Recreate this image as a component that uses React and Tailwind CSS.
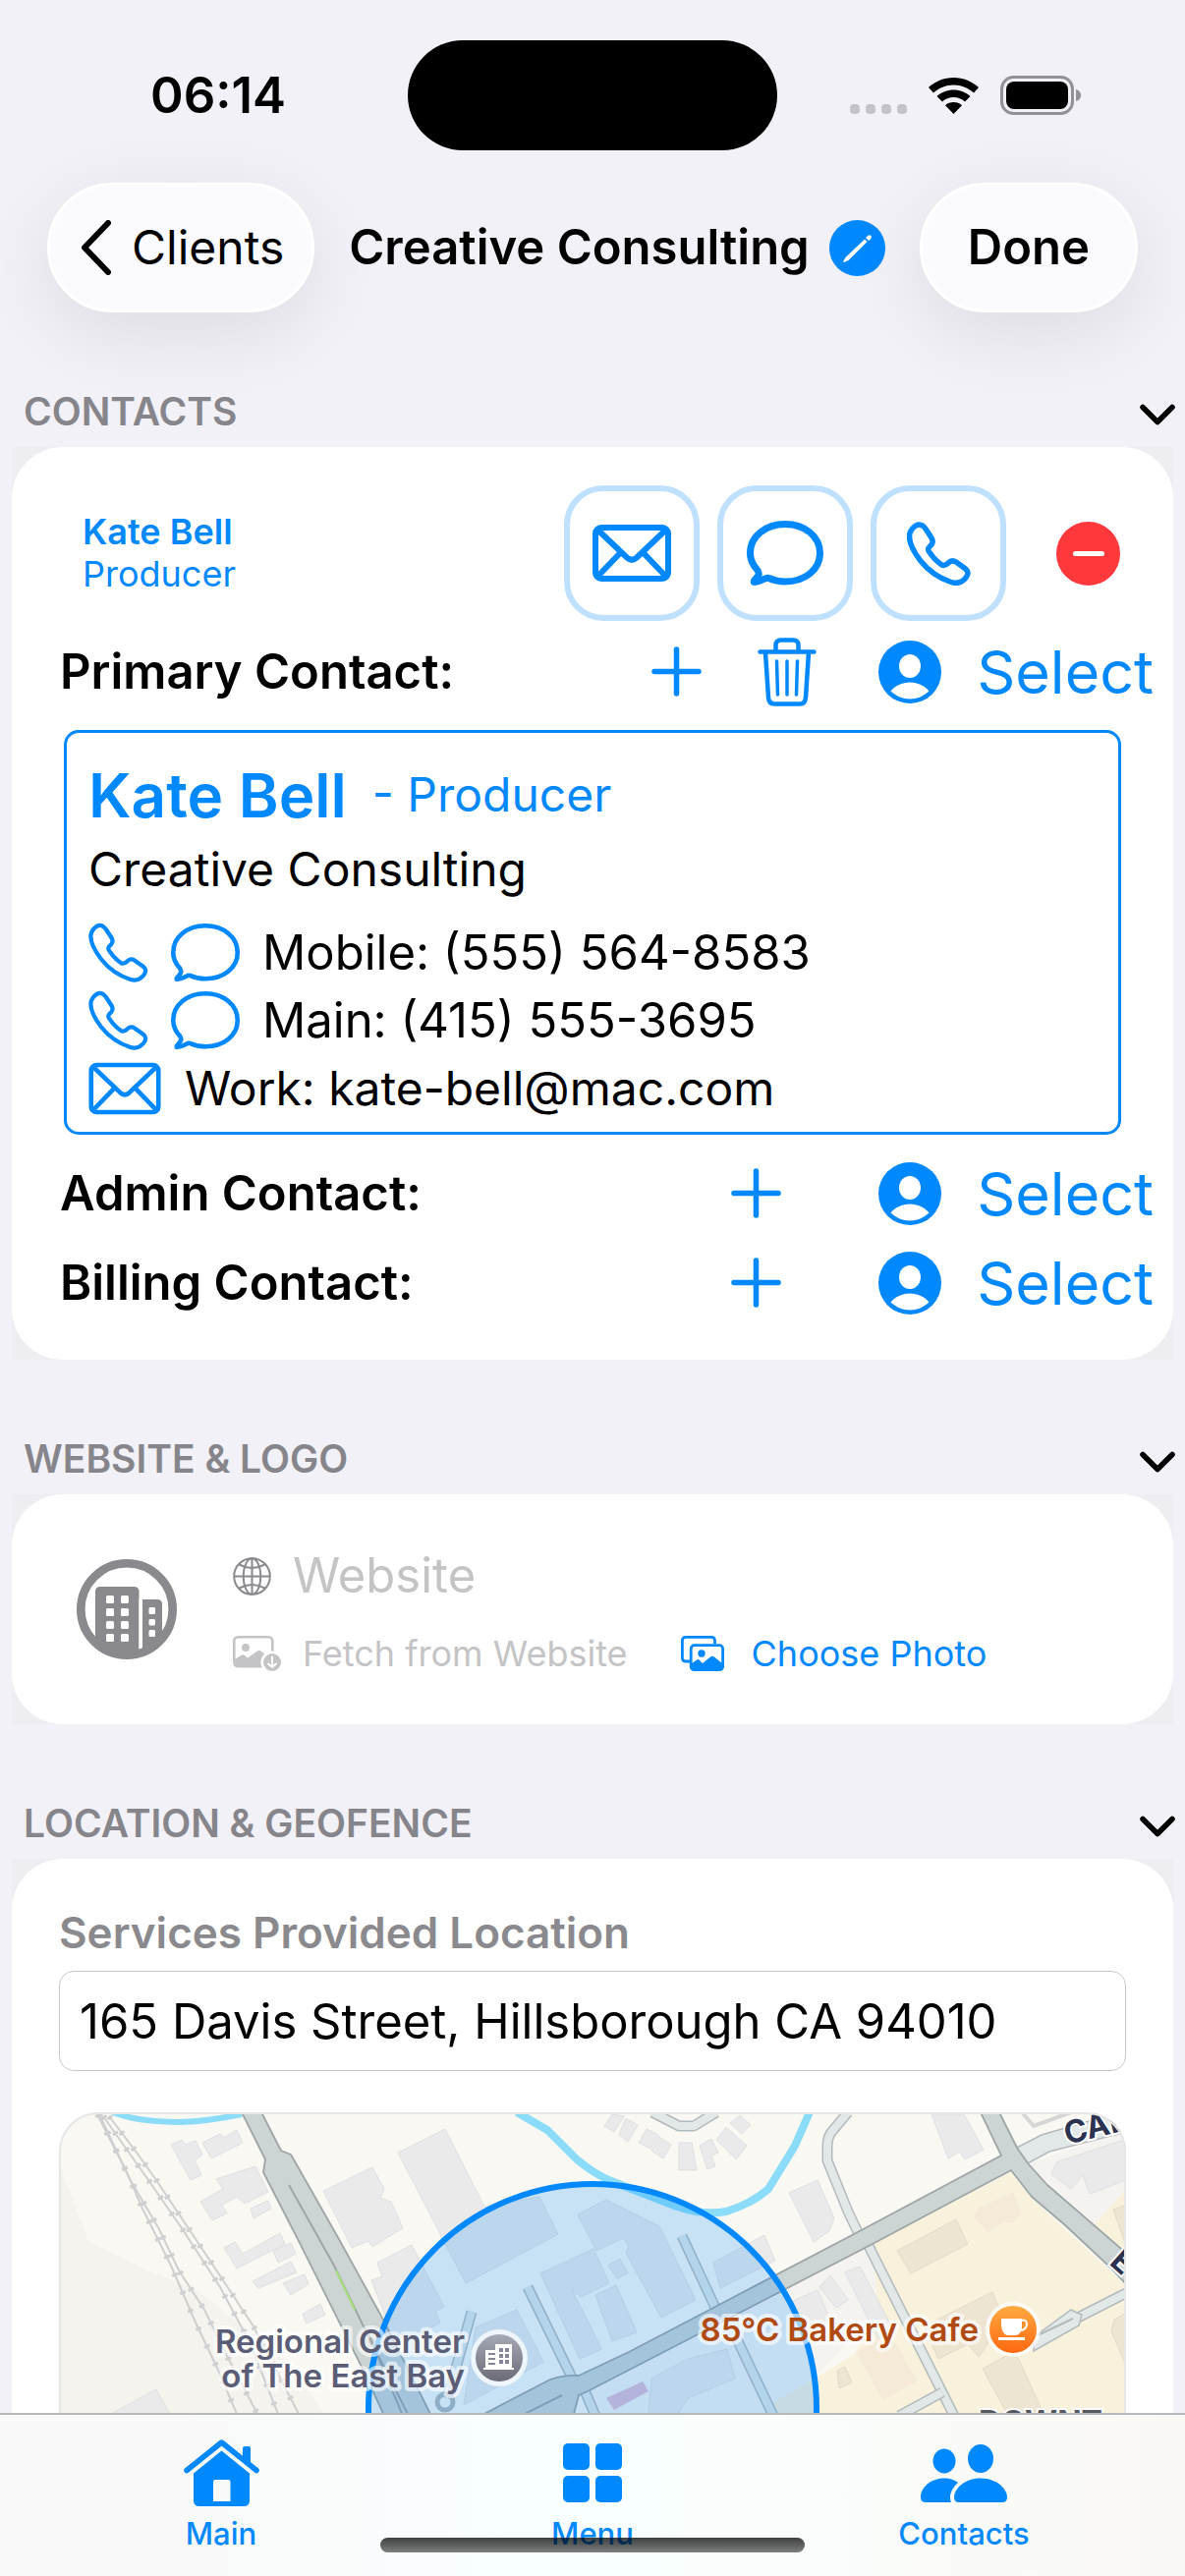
import React, { useState } from 'react';

function MailIcon({ className, strokeWidth = 6 }) {
    return (
        <svg viewBox="0 0 80 58" className={className} fill="none" stroke="currentColor" strokeWidth={strokeWidth} strokeLinejoin="round">
            <rect x="3" y="3" width="74" height="52" rx="6" />
            <path d="M5 5 L35 33.5 Q40 38 45 33.5 L75 5" />
            <path d="M5 53 L29 28 M75 53 L51 28" />
        </svg>
    );
}

function BubbleIcon({ className, strokeWidth = 7 }) {
    return (
        <svg viewBox="0 0 78 66" className={className} fill="none" stroke="currentColor" strokeWidth={strokeWidth} strokeLinejoin="round">
            <path d="M39 3.5 C59 3.5 74.5 16 74.5 33 C74.5 50 59 62 39 62 C33 62 27 60.5 22.500 58.500 C19 57 17 61.500 8 62.500 C7 62.500 7 61.500 8 60.500 C12 56 13.500 54.500 11 50.500 C6 45 3.500 40 3.500 33 C3.500 16 19 3.500 39 3.500Z" />
        </svg>
    );
}

function PhoneIcon({ className, strokeWidth = 5.5 }) {
    return (
        <svg viewBox="0 0 65 65" className={className} fill="none" stroke="currentColor" strokeWidth={strokeWidth} strokeLinejoin="round">
            <path d="M12.500 3 C15.500 3 17.500 5 19.500 8 L25 16.500 C27 19.500 26.500 21.500 24.500 24 C22 26.500 20.500 27.500 22.500 30.500 C26.500 36.500 31 41 35.500 44 C37.500 45 39.500 44.500 42 42 C44.500 39.500 47.500 39.500 50 41 L59 47.500 C62.500 50 63 53 60 57 C56 62 51 63.500 45 61.500 C34 58 22 50 14 40 C7 31 2.500 22 2.500 15 C2.500 9 8 3 12.500 3Z" />
        </svg>
    );
}

function PlusIcon() {
    return (
        <svg viewBox="0 0 51 51" className="w-[51px] h-[51px]" fill="none" stroke="currentColor" strokeWidth="5.5" strokeLinecap="round">
            <path d="M25.500 3 V48 M3 25.500 H48" />
        </svg>
    );
}

function TrashIcon() {
    return (
        <svg viewBox="0 0 60 70" className="w-[60px] h-[70px]" fill="none" stroke="currentColor" strokeWidth="4.5" strokeLinecap="round" strokeLinejoin="round">
            <path d="M2.500 14.500 H57.500" />
            <path d="M18.500 14 V8 Q18.500 2.500 24 2.500 H36 Q41.500 2.500 41.500 8 V14" />
            <path d="M8 15 L11 61 Q11.500 67.500 17 67.500 H43 Q48.500 67.500 49 61 L52 15" />
            <path strokeWidth="3.500" d="M19.500 24 L20.500 58 M30 24 V58 M40.500 24 L39.500 58" />
        </svg>
    );
}

function PersonIcon() {
    return (
        <svg viewBox="0 0 64 64" className="w-16 h-16">
            <circle cx="32" cy="32" r="32" fill="currentColor" />
            <ellipse cx="32" cy="26" rx="11" ry="12" fill="#fff" />
            <path fill="#fff" d="M12.500 51.500 C17 46 24 42.500 32 42.500 C40 42.500 47 46 51.500 51.500 C46 56.500 39.500 59.500 32 59.500 C24.500 59.500 18 56.500 12.500 51.500Z" />
        </svg>
    );
}

function ChevronDown() {
    return (
        <svg viewBox="0 0 36 22" className="w-9 h-[22px]" fill="none" stroke="#000" strokeWidth="5.5" strokeLinecap="round" strokeLinejoin="round">
            <path d="M3 3.500 L18 18.500 L33 3.500" />
        </svg>
    );
}

function GlobeIcon() {
    return (
        <svg viewBox="0 0 39 39" className="w-[39px] h-[39px] text-[#8a8a8e]" fill="none" stroke="currentColor" strokeWidth="2">
            <circle cx="19.500" cy="19.500" r="18.300" />
            <ellipse cx="19.500" cy="19.500" rx="8.800" ry="18.300" />
            <path d="M19.500 1 V38 M1 19.500 H38 M6.500 7.500 Q19.500 14.500 32.500 7.500 M6.500 31.500 Q19.500 24.500 32.500 31.500" />
        </svg>
    );
}

function CompanyLogo() {
    const windows = [37, 50, 63, 76];
    return (
        <svg viewBox="0 0 102 102" className="w-[102px] h-[102px]">
            <defs>
                <clipPath id="logo-clip">
                    <circle cx="51" cy="51" r="50" />
                </clipPath>
            </defs>
            <circle cx="51" cy="51" r="46.700" fill="none" stroke="#8a8a8e" strokeWidth="8.600" />
            <g clipPath="url(#logo-clip)">
                <path fill="#8a8a8e" d="M19 110 V33 Q19 28 24 28 H58 Q63.500 28 63.500 33 V110Z" />
                <path fill="#8a8a8e" d="M67 110 V41 H82 Q87 41 87 46 V110Z" />
                <path fill="#8a8a8e" d="M19 80 L40 102 H64 V92 Q67 92 67 90 L88 72 V102 H19Z" />
                <path fill="#fff" d="M63.500 41 H67 V90 L63.500 91.500Z" />
                {windows.map((y) => (
                    <g key={y} fill="#fff">
                        <rect x="30" y={y} width="8" height="8" rx="1.500" />
                        <rect x="45" y={y} width="8" height="8" rx="1.500" />
                    </g>
                ))}
                <g fill="#fff">
                    <rect x="73.500" y="49" width="6.500" height="7" rx="1.500" />
                    <rect x="73.500" y="61" width="6.500" height="6.500" rx="1.500" />
                    <rect x="73.500" y="72" width="6.500" height="7" rx="1.500" />
                </g>
            </g>
        </svg>
    );
}

function PhotoDownloadIcon() {
    return (
        <svg viewBox="0 0 49 36" className="w-[49px] h-9">
            <rect x="1.300" y="1.300" width="39" height="30" rx="4" fill="none" stroke="currentColor" strokeWidth="2.600" />
            <circle cx="13" cy="12" r="4" fill="currentColor" />
            <path fill="currentColor" d="M1.500 24 L9 19.500 Q10.500 18.800 12 20 L15 22.500 L25 15.500 Q27 14.500 29 16 L40 24 V31.500 H3Z" />
            <circle cx="40" cy="27" r="11.500" fill="#fff" />
            <circle cx="40" cy="27" r="9" fill="currentColor" />
            <path d="M40 21.500 V32 M36 28.500 L40 32 L44 28.500" fill="none" stroke="#fff" strokeWidth="1.800" strokeLinecap="round" />
        </svg>
    );
}

function PhotosIcon() {
    return (
        <svg viewBox="0 0 44 36" className="w-11 h-9" fill="none" stroke="currentColor" strokeWidth="2.800">
            <path d="M9 26 H5 Q1.400 26 1.400 22.500 V5 Q1.400 1.400 5 1.400 H31 Q34.500 1.400 34.500 5 V8" />
            <rect x="10.200" y="9.700" width="32.400" height="25" rx="3.500" />
            <circle cx="21" cy="18" r="3.700" fill="currentColor" stroke="none" />
            <path fill="currentColor" stroke="none" d="M10 29 L16 24.500 Q17.500 23.500 19 25 L22 28 L30 21.500 Q32 20 34 21.500 L43 29 V34 H10Z" />
        </svg>
    );
}

const buildings = [
    '174,2182 185,2177 189,2182 199,2178 206,2192 198,2198 205,2213 194,2218',
    '206,2180 224,2171 228,2175 241,2167 247,2180 215,2196',
    '220,2217 260,2204 273,2230 249,2242 241,2235 226,2243 231,2252 216,2259 204,2240 227,2227',
    '255,2247 273,2239 276,2247 258,2257',
    '228,2287 239,2281 247,2293 285,2272 290,2283 241,2308',
    '278,2290 296,2282 301,2293 283,2302',
    '257,2321 296,2301 302,2312 263,2328',
    '288,2323 310,2314 314,2324 296,2335',
    '308,2354 326,2344 331,2355 312,2364',
    '329,2229 379,2205 391,2227 387,2236 398,2240 410,2267 379,2286 375,2280 358,2287',
    '405,2190 453,2166 493,2245 549,2235 568,2273 474,2323',
    '384,2302 419,2284 452,2347 443,2352 448,2363 400,2390 390,2350 378,2320 389,2316',
    '113,2456 159,2431 175,2460',
    '588,2253 617,2238 671,2265 708,2340 673,2358 637,2292 640,2285 634,2277 607,2290',
    '550,2313 604,2288 620,2323 591,2337 582,2330 600,2365 612,2390 590,2400',
    '606,2335 627,2325 648,2373 623,2382',
    '619,2305 631,2298 639,2313 628,2318',
    '484,2368 526,2350 553,2403 472,2447',
    '726,2302 778,2274 789,2300 733,2328',
    '663,2420 700,2400 740,2390 748,2420 700,2440 690,2456 660,2456',
    '803,2231 832,2218 849,2257 844,2270 828,2281',
    '834,2327 845,2315 863,2340 851,2348',
    '860,2312 875,2306 909,2370 894,2380',
    '805,2342 832,2330 845,2360 815,2375',
    '1070,2212 1075,2200 1141,2178 1146,2178 1146,2218 1109,2232 1102,2213 1090,2227',
    '948,2151 981,2151 1001,2187 982,2197 977,2189 965,2196',
    '615,2163 623,2151 635,2153 625,2169',
    '630,2172 637,2155 649,2162 639,2179',
    '650,2180 658,2166 670,2172 662,2186',
    '663,2188 671,2174 683,2182 675,2196',
    '691,2180 704,2180 709,2208 691,2208',
    '712,2183 724,2176 731,2190 724,2193 728,2204 720,2207',
    '729,2177 739,2164 760,2183 749,2197',
    '743,2160 753,2152 764,2162 755,2171',
];

const downtownBuildings = [
    '913,2290 973,2258 985,2283 927,2313',
    '940,2367 1010,2332 1022,2360 996,2398 985,2385 955,2400',
    '1000,2410 1033,2392 1062,2456 1025,2456',
    '1134,2360 1146,2353 1146,2407 1131,2372',
    '1133,2248 1146,2243 1146,2285',
    '852,2412 860,2408 867,2424 854,2430',
];

const rails = [
    'M99 2151 L130 2212 L145 2247 L174 2305 L199 2363 L220 2407 L241 2456',
    'M101 2151 L132 2217 L162 2268 L182 2310 L208 2350 L231 2397 L262 2456',
    'M105 2153 L151 2218 L185 2267 L224 2327 L254 2383 L283 2456',
    'M111 2153 L139 2190 L159 2218 L195 2272 L229 2323 L258 2367 L304 2456',
];

const lanes = [
    'M863 2149 L848 2167 Q842 2173 842 2183 V2198 L863 2250 L874 2273',
    'M883 2283 L971 2458',
    'M664 2149 L691 2163 H706 L729 2149',
    'M915 2458 L959 2434',
    'M1052 2383 L1095 2359 L1146 2333',
    'M537 2327 L585 2425',
    'M694 2275 L729 2350',
    'M750 2380 L787 2458',
    'M480 2352 L463 2413 L455 2440',
    'M594 2430 L606 2458',
];

function GeofenceMap() {
    return (
        <svg viewBox="60 2149 1086 420" className="block w-full h-auto" fontFamily='Inter, "Noto Sans", sans-serif'>
            <defs>
                <linearGradient id="pin-gray" x1="0" y1="0" x2="0" y2="1">
                    <stop offset="0" stopColor="#a6a9b6" />
                    <stop offset="1" stopColor="#6b6b77" />
                </linearGradient>
                <linearGradient id="pin-orange" x1="0" y1="0" x2="0" y2="1">
                    <stop offset="0" stopColor="#ffab42" />
                    <stop offset="1" stopColor="#ff6810" />
                </linearGradient>
            </defs>
            <rect x="60" y="2149" width="1086" height="420" fill="#f9f8f3" />
            <path fill="#f4f3ee" d="M60 2200 L90 2280 L150 2310 L200 2330 L290 2400 L330 2456 V2569 H60Z" />
            <path fill="#f4f3f0" d="M888 2283 L726 2348 L600 2432 V2460 H790 L894 2350Z" />
            <path fill="#f4f3f0" d="M1046 2201 L1146 2168 V2227 L1114 2263Z" />
            <path fill="#f8f1dc" d="M888 2283 L1029 2210 L1050 2237 L1146 2325 V2569 H740 L789 2443 L834 2417 L870 2395 L894 2350Z" />
            <path fill="#f8f1dc" d="M1114 2263 L1146 2227 V2292Z" />
            {buildings.map((points) => (
                <polygon key={points} points={points} fill="#ebeaea" stroke="#dfdfdf" strokeWidth="1" />
            ))}
            {downtownBuildings.map((points) => (
                <polygon key={points} points={points} fill="#ede5d2" stroke="#e2d9c6" strokeWidth="1" />
            ))}
            <polygon points="991,2255 995,2247 1031,2230 1039,2251 1032,2261 1020,2261 1005,2271" fill="#f5e9d7" />
            <polygon points="871,2393 905,2375 934,2422 898,2442" fill="#f5e9d7" />
            <polygon points="617,2440 654,2423 660,2433 625,2452" fill="#e2bfd2" />
            {rails.map((d) => (
                <g key={d} fill="none" stroke="#cfcfcf">
                    <path d={d} strokeWidth="2" />
                    <path d={d} strokeWidth="6" strokeDasharray="3 17" />
                </g>
            ))}
            <g fill="none" stroke="#8bdcf8" strokeLinejoin="round">
                <path strokeWidth="6" d="M115 2149 Q140 2159 184 2159 Q212 2158 246 2151" />
                <path strokeWidth="8" d="M526 2149 L557 2167 L587 2197 Q605 2212 622 2219 L689 2245 Q716 2254 739 2250 Q765 2242 782 2227 Q800 2198 809 2183 L824 2149" />
            </g>
            {lanes.map((d) => (
                <g key={d} fill="none" strokeLinejoin="round">
                    <path d={d} stroke="#b3babb" strokeWidth="11" />
                    <path d={d} stroke="#e2e8e8" strokeWidth="8" />
                </g>
            ))}
            <path fill="#e2e8e8" stroke="#b3babb" strokeWidth="1.500" d="M1052 2378 L1090 2350 L1096 2353 L1101 2355 L1098 2366 L1052 2392Z" />
            <path stroke="#b3babb" strokeWidth="2" d="M1056 2376 L1092 2359" />
            <circle cx="453" cy="2444" r="8" fill="none" stroke="#b3babb" strokeWidth="5" />
            <path fill="#e2e8e8" stroke="#b3babb" strokeWidth="1.500" d="M1033 2186 L1060 2172 L1150 2146 V2168 L1068 2189 L1044 2202Z" />
            <path fill="none" stroke="#d6d6d4" strokeWidth="4" d="M1040 2149 L1052 2163 L1090 2149" />
            <g fill="#cdd4d4" stroke="#9ea5a5" strokeWidth="1.800" strokeLinejoin="round">
                <path d="M245 2147 L270 2197 L268 2210 L304 2280 L369 2410 L392 2460 H440 L390 2360 L346 2280 L296 2192 L286 2188 L265 2147Z" />
                <path d="M485 2460 L560 2421 Q575 2416 589 2417 L640 2393 L726 2348 L871 2272 L1019 2193 L997 2147 H1016 L1035 2185 L1046 2201 L1066 2223 L1148 2294 V2326 L1130 2307 L1083 2263 L1050 2235 L1029 2208 L888 2283 L600 2432 L589 2437 L583 2460Z" />
            </g>
            <path fill="none" stroke="#9ea5a5" strokeWidth="2" d="M294 2223 L340 2305 L369 2365 L417 2460 M374 2372 L410 2458 M530 2458 L572 2437" />
            <path stroke="#a5e07c" strokeWidth="2" d="M342 2310 L361 2350" />
            <circle cx="603" cy="2450" r="228" fill="#0088ff" fillOpacity="0.2" stroke="#0088ff" strokeWidth="6" />

            <g fontWeight="600" fontSize="33" stroke="#fff" strokeOpacity="0.65" strokeWidth="8" strokeLinejoin="round" paintOrder="stroke">
                <text x="473" y="2394" textAnchor="end" fill="#5a5d75">Regional Center</text>
                <text x="473" y="2429" textAnchor="end" fill="#5a5d75">of The East Bay</text>
                <text x="996" y="2382" textAnchor="end" fill="#b04a12">85°C Bakery Cafe</text>
            </g>
            <g fontWeight="700" fontSize="32" fill="#2b3350" stroke="#fff" strokeWidth="4" paintOrder="stroke">
                <text x="1086" y="2182" transform="rotate(-14 1086 2182)">CAL</text>
                <text x="1128" y="2303" transform="rotate(42 1128 2303)">E</text>
                <text x="996" y="2476" fill="#55585f">DOWNT</text>
            </g>

            <circle cx="508" cy="2399" r="29" fill="#fff" fillOpacity="0.75" />
            <circle cx="508" cy="2399" r="24" fill="url(#pin-gray)" />
            <g fill="#fff">
                <path d="M494 2409 V2391 H504 V2385 H521 V2409 H523 V2411 H492 V2409Z" />
                <path fill="#85869a" d="M508 2389 h4v4h-4z M514 2389 h4v4h-4z M508 2395 h4v4h-4z M514 2395 h4v4h-4z M508 2401 h4v4h-4z M514 2401 h4v4h-4z M497 2394 h7v2h-7z M497 2399 h7v2h-7z M497 2404 h7v2h-7z" />
            </g>
            <circle cx="1031" cy="2370" r="28" fill="#fff" fillOpacity="0.75" />
            <circle cx="1031" cy="2370" r="24" fill="url(#pin-orange)" />
            <path fill="#fff" d="M1019 2359 H1040 V2368 Q1039 2376 1033 2376 H1025 Q1020 2375 1019 2366Z M1016 2378 H1043 V2381 H1016Z" />
            <path fill="none" stroke="#fff" strokeWidth="2" d="M1039 2361 Q1045 2359 1045 2365 Q1044 2371 1038 2371" />
        </svg>
    );
}

function StatusBar() {
    return (
        <div className="grid grid-cols-[1fr_376px_1fr] items-center h-28 mt-[41px]">
            <div className="pl-[153px] text-[51px] leading-[60px] font-semibold">06:14</div>
            <div className="h-28 rounded-full bg-black" />
            <div className="flex items-center justify-end gap-[22px] pr-[106px]">
                <div className="flex gap-[6px] pt-7">
                    <span className="w-[10px] h-[10px] rounded-[4px] bg-[#c4c3c9]" />
                    <span className="w-[10px] h-[10px] rounded-[4px] bg-[#c4c3c9]" />
                    <span className="w-[10px] h-[10px] rounded-[4px] bg-[#c4c3c9]" />
                    <span className="w-[10px] h-[10px] rounded-[4px] bg-[#c4c3c9]" />
                </div>
                <svg viewBox="0 0 51 37" className="w-[51px] h-[37px]">
                    <path d="M25.500 0 C35.500 0 44.500 4 51 10 L46 15.500 C40.500 10.500 33.500 7.500 25.500 7.500 C17.500 7.500 10.500 10.500 5 15.500 L0 10 C6.500 4 15.500 0 25.500 0Z" />
                    <path d="M25.500 12.500 C32 12.500 38 15 42.500 19 L37 24.500 C34 21.700 30 20 25.500 20 C21 20 17 21.700 14 24.500 L8.500 19 C13 15 19 12.500 25.500 12.500Z" />
                    <path d="M25.500 25 C28.700 25 31.700 26.200 34 28.200 L25.500 37 L17 28.200 C19.300 26.200 22.300 25 25.500 25Z" />
                </svg>
                <svg viewBox="0 0 82 40" className="w-[82px] h-10">
                    <rect x="1.500" y="1.500" width="72" height="37" rx="12" fill="none" stroke="#929196" strokeWidth="3" />
                    <rect x="6" y="6" width="63" height="28" rx="8" />
                    <path d="M77 14 C81 15 82 18 82 20 C82 22 81 25 77 26Z" fill="#929196" />
                </svg>
            </div>
        </div>
    );
}

function NavBar() {
    return (
        <header className="flex items-center justify-between h-[132px] mt-[33px] px-12">
            <button className="flex items-center gap-5 h-full pl-[31px] pr-7 rounded-full border-3 border-white bg-[#fbfbff] text-[48px] shadow-[0_20px_80px_rgba(0,0,0,0.09)]">
                <svg viewBox="0 0 32 56" className="w-8 h-14" fill="none" stroke="#000" strokeWidth="6" strokeLinecap="round" strokeLinejoin="round">
                    <path d="M28 3 L4 28 L28 53" />
                </svg>
                Clients
            </button>
            <div className="flex items-center gap-5">
                <h1 className="text-[49px] font-semibold">Creative Consulting</h1>
                <button aria-label="Edit name">
                    <svg viewBox="0 0 57 57" className="w-[57px] h-[57px]">
                        <circle cx="28.500" cy="28.500" r="28.500" fill="#0088ff" />
                        <path fill="#fff" d="M36 19.500 L38.500 22 L19.500 41 L15 43 Q14 43 14.300 41.800 L16.500 38Z M37.200 18 L39 16 Q41 14.500 42.500 16 Q43.500 17.500 42 19.500 L40 21Z" />
                    </svg>
                </button>
            </div>
            <button className="h-full px-[46px] rounded-full border-3 border-white bg-[#fbfbff] text-[49px] font-semibold shadow-[0_20px_80px_rgba(0,0,0,0.09)]">Done</button>
        </header>
    );
}

function Section({ title, children }) {
    const [open, setOpen] = useState(true);
    return (
        <section>
            <button onClick={() => setOpen(!open)} className="flex items-end justify-between w-full h-[137px] pl-6 pr-[10px] pb-3">
                <span className="text-[39px] leading-[48px] font-semibold text-[#86858b]">{title}</span>
                <span className="pb-[10px]">
                    <ChevronDown />
                </span>
            </button>
            {open && (
                <div className="mx-3 bg-[#eeedf2]">
                    <div className="rounded-[52px] bg-white overflow-hidden">{children}</div>
                </div>
            )}
        </section>
    );
}

function RoundButton({ label, children }) {
    return (
        <button aria-label={label} className="flex items-center justify-center w-[138px] h-[138px] rounded-[40px] border-6 border-[#bfe0ff]">
            {children}
        </button>
    );
}

function ContactRow({ label, removable }) {
    return (
        <div className="flex items-center h-[91px] pl-[49px] pr-5">
            <span className="flex-1 text-[49px] font-semibold text-black">{label}</span>
            <button aria-label="Add" className={removable ? 'mr-[57px]' : 'mr-[99px]'}>
                <PlusIcon />
            </button>
            {removable && (
                <button aria-label="Delete" className="mr-[63px]">
                    <TrashIcon />
                </button>
            )}
            <button className="flex items-center gap-9 text-[61px] leading-[72px]">
                <PersonIcon />
                Select
            </button>
        </div>
    );
}

function ContactsCard() {
    return (
        <div className="pt-[39px] pb-[33px] text-[#0088ff]">
            <div className="flex items-center pl-[72px] pr-[54px]">
                <div className="flex-1 text-[36px] leading-[43px]">
                    <div className="font-semibold">Kate Bell</div>
                    <div>Producer</div>
                </div>
                <div className="flex gap-[18px] mr-[51px]">
                    <RoundButton label="Email">
                        <MailIcon className="w-20 h-[58px]" />
                    </RoundButton>
                    <RoundButton label="Message">
                        <BubbleIcon className="w-[78px] h-[66px]" />
                    </RoundButton>
                    <RoundButton label="Call">
                        <PhoneIcon className="w-[65px] h-[65px]" />
                    </RoundButton>
                </div>
                <button aria-label="Remove" className="flex items-center justify-center w-[65px] h-[65px] rounded-full bg-[#ff383c]">
                    <span className="w-8 h-[5px] rounded-full bg-white" />
                </button>
            </div>

            <div className="pt-1.5 pb-3.5">
                <ContactRow label="Primary Contact:" removable />
            </div>

            <div className="mx-[53px] px-[22px] pt-[27px] pb-[10px] rounded-[15px] border-3 border-[#0088ff] text-[48px] text-black">
                <div className="flex items-center gap-[26px] h-[72px] text-[#0088ff]">
                    <h2 className="text-[62px] font-semibold">Kate Bell</h2>
                    <span>- Producer</span>
                </div>
                <div className="mt-[10px] mb-5 leading-[60px]">Creative Consulting</div>
                <div className="flex items-center gap-[22px] h-[69px] text-[49px]">
                    <PhoneIcon className="w-[61px] h-[61px] text-[#0088ff]" strokeWidth={4.5} />
                    <BubbleIcon className="w-[72px] h-[61px] text-[#0088ff]" strokeWidth={5} />
                    <span>Mobile: (555) 564-8583</span>
                </div>
                <div className="flex items-center gap-[22px] h-[69px] text-[49px]">
                    <PhoneIcon className="w-[61px] h-[61px] text-[#0088ff]" strokeWidth={4.5} />
                    <BubbleIcon className="w-[72px] h-[61px] text-[#0088ff]" strokeWidth={5} />
                    <span>Main: (415) 555-3695</span>
                </div>
                <div className="flex items-center gap-6 h-[69px]">
                    <MailIcon className="w-[74px] h-[54px] text-[#0088ff]" strokeWidth={5} />
                    <span>Work: kate-bell@mac.com</span>
                </div>
            </div>

            <div className="pt-3.5">
                <ContactRow label="Admin Contact:" />
                <ContactRow label="Billing Contact:" />
            </div>
        </div>
    );
}

function WebsiteCard() {
    return (
        <div className="flex items-center gap-[57px] h-[234px] pl-[66px] pr-12">
            <CompanyLogo />
            <div className="flex-1 flex flex-col gap-[18px]">
                <label className="flex items-center gap-[22px] h-[72px]">
                    <GlobeIcon />
                    <input type="url" aria-label="Website" placeholder="Website" className="flex-1 text-[49px] outline-none placeholder:text-[#c4c4c6]" />
                </label>
                <div className="flex items-center h-[50px] text-[36px]">
                    <button disabled className="flex items-center gap-[22px] text-[#c4c4c6]">
                        <PhotoDownloadIcon />
                        Fetch from Website
                    </button>
                    <button className="flex items-center gap-7 ml-[54px] text-[#0088ff]">
                        <PhotosIcon />
                        Choose Photo
                    </button>
                </div>
            </div>
        </div>
    );
}

function LocationCard() {
    return (
        <div className="pt-12 px-12">
            <label htmlFor="location" className="block text-[44px] leading-[54px] font-semibold text-[#8a8a8e]">Services Provided Location</label>
            <input
                id="location"
                defaultValue="165 Davis Street, Hillsborough CA 94010"
                className="w-full h-[102px] mt-3 px-5 rounded-[15px] border border-[#c8c8ca] text-[49px] text-black outline-none"
            />
            <div className="mt-[42px] rounded-[40px] overflow-hidden outline-2 -outline-offset-2 outline-[#e6e6e6]">
                <GeofenceMap />
            </div>
        </div>
    );
}

function TabBar() {
    return (
        <nav className="relative shrink-0 grid grid-cols-3 h-[166px] px-9 border-t-2 border-[#b5b9b9] bg-linear-to-r from-[#f9f9f9] from-15% via-[#f9ffff] to-[#faf8f4] text-[31px] font-medium text-[#0088ff]">
            <a href="#main" className="flex flex-col items-center gap-[9px] pt-6">
                <span className="flex items-center h-[70px]">
                    <svg viewBox="0 0 77 68" className="w-[77px] h-[68px]" fill="currentColor">
                        <path fill="none" stroke="currentColor" strokeWidth="5.500" strokeLinecap="round" strokeLinejoin="round" d="M3 31.500 L38.500 3 L74 31.500" />
                        <path d="M60 9 Q60 7 62 7 H66 Q68 7 68 9 V26 L60 19Z" />
                        <path fillRule="evenodd" d="M38.500 11.500 L67 34.500 V62 Q67 68 61 68 H16 Q10 68 10 62 V34.500Z M30 43 V63 H47.500 V43 Q47.500 41 45.500 41 H32 Q30 41 30 43Z" />
                    </svg>
                </span>
                <span className="leading-9">Main</span>
            </a>
            <a href="#menu" className="flex flex-col items-center gap-[9px] pt-6">
                <span className="flex items-center h-[70px]">
                    <svg viewBox="0 0 60 60" className="w-[60px] h-[60px]" fill="currentColor">
                        <rect width="27" height="27" rx="5" />
                        <rect x="33" width="27" height="27" rx="5" />
                        <rect y="33" width="27" height="27" rx="5" />
                        <rect x="33" y="33" width="27" height="27" rx="5" />
                    </svg>
                </span>
                <span className="leading-9">Menu</span>
            </a>
            <a href="#contacts" className="flex flex-col items-center gap-[9px] pt-6">
                <span className="flex items-center h-[70px]">
                    <svg viewBox="0 0 88 59" className="w-[88px] h-[59px]" fill="currentColor">
                        <ellipse cx="24" cy="17" rx="11.500" ry="12.500" />
                        <ellipse cx="61" cy="14.500" rx="13" ry="14.500" />
                        <path d="M24 34.500 C30 34.500 35 36.500 38 39 C33 43.500 30 49 30 54 Q30 57 31 59 H5 Q0 59 0 54 C0 44 10 34.500 24 34.500Z" />
                        <path d="M61 34.500 C77 34.500 88 45 88 54 Q88 59 83 59 H39 Q34 59 34 54 C34 45 45 34.500 61 34.500Z" />
                    </svg>
                </span>
                <span className="leading-9">Contacts</span>
            </a>
            <div className="absolute bottom-6 left-1/2 -translate-x-1/2 w-[432px] h-[15px] rounded-full bg-linear-to-b from-black/75 to-black/50" />
        </nav>
    );
}

export default function App() {
    return (
        <div className='flex flex-col h-screen overflow-hidden bg-[#f2f1f7] text-black font-[Inter,"Noto_Sans",sans-serif]'>
            <main className="flex-1 min-h-0 overflow-hidden">
                <StatusBar />
                <NavBar />
                <Section title="CONTACTS">
                    <ContactsCard />
                </Section>
                <Section title="WEBSITE & LOGO">
                    <WebsiteCard />
                </Section>
                <Section title="LOCATION & GEOFENCE">
                    <LocationCard />
                </Section>
            </main>
            <TabBar />
        </div>
    );
}
